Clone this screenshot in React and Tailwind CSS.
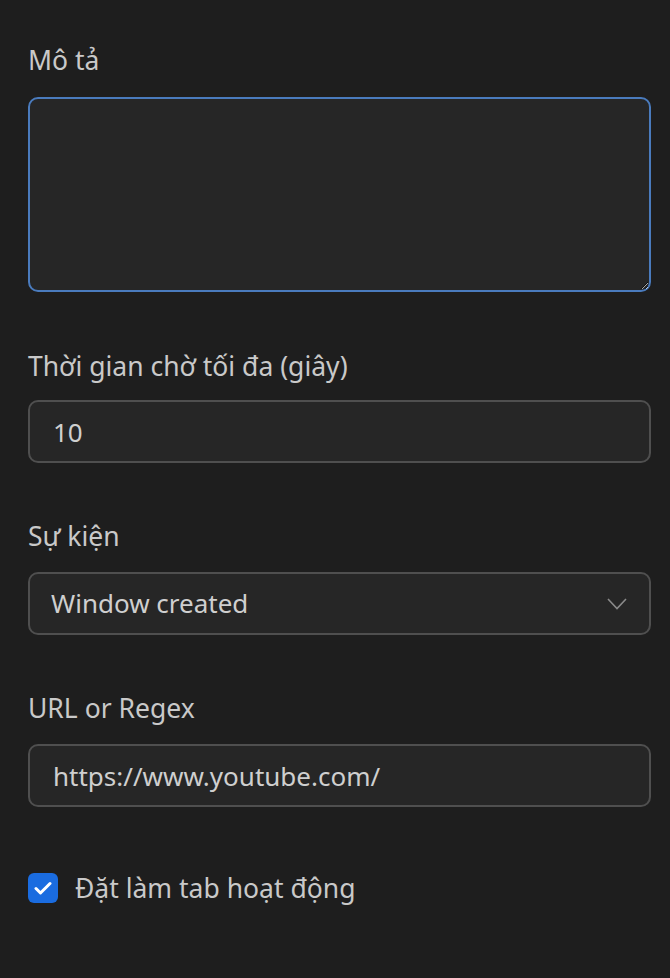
import React from "react";

const font = { fontFamily: '"Noto Sans", "Open Sans", sans-serif' };

function Label({ children }) {
  return <div className="text-[26.5px] leading-[34px] text-[#c9c9c9]">{children}</div>;
}

function TextInput({ value }) {
  return (
    <input
      readOnly
      value={value}
      className="h-[63px] w-full rounded-[10px] border-2 border-[#4f4f4f] bg-[#262626] px-[23px] text-[26px] text-[#cfcfcf] outline-none"
    />
  );
}

export default function App() {
  return (
    <div className="min-h-[978px] w-full bg-[#1e1e1e] pl-[28px] pr-[19px] pt-[43px]" style={font}>
      <Label>Mô tả</Label>
      <textarea
        className="mt-[20px] block h-[195px] w-full rounded-[10px] border-2 border-[#4a7bbd] bg-[#262626] text-[24px] text-[#cfcfcf] outline-none [color-scheme:dark]"
      />

      <div className="mt-[57px]">
        <Label>Thời gian chờ tối đa (giây)</Label>
      </div>
      <div className="mt-[17px]">
        <TextInput value="10" />
      </div>

      <div className="mt-[56px]">
        <Label>Sự kiện</Label>
      </div>
      <div className="mt-[19px] flex h-[63px] w-full items-center justify-between rounded-[10px] border-2 border-[#4f4f4f] bg-[#262626] pl-[21px] pr-[22px]">
        <span className="text-[26px] text-[#cfcfcf]">Window created</span>
        <svg width="20" height="12" viewBox="0 0 20 12" fill="none">
          <path d="M1 1l9 9.5L19 1" stroke="#8a8a8a" strokeWidth="1.6" />
        </svg>
      </div>

      <div className="mt-[56px]">
        <Label>URL or Regex</Label>
      </div>
      <div className="mt-[19px]">
        <TextInput value="https://www.youtube.com/" />
      </div>

      <div className="mt-[64px] flex items-center gap-[17px]">
        <div className="flex h-[30px] w-[30px] items-center justify-center rounded-[6px] bg-[#1a6ce0]">
          <svg width="18" height="14" viewBox="0 0 18 14" fill="none">
            <path d="M2 7.5l4.5 4.5L16 2.5" stroke="#ffffff" strokeWidth="3" strokeLinecap="round" strokeLinejoin="round" />
          </svg>
        </div>
        <span className="text-[26.5px] leading-[34px] text-[#c9c9c9]">Đặt làm tab hoạt động</span>
      </div>
    </div>
  );
}
